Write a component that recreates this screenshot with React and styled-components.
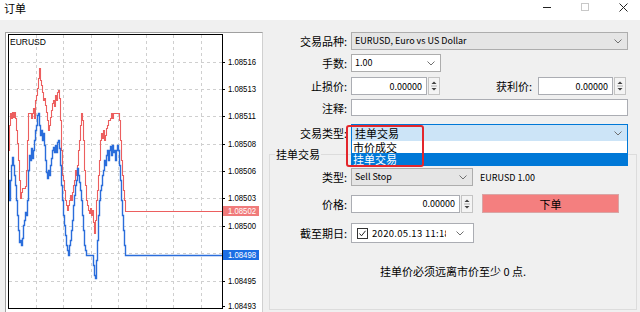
import React from "react";
import styled, { createGlobalStyle } from "styled-components";

const GlobalStyle = createGlobalStyle`
  body {
    margin: 0;
    background: #f0f0f0;
    overflow: hidden;
  }
`;

const Window = styled.div`
  width: 640px;
  height: 312px;
  overflow: hidden;
  display: flex;
  flex-direction: column;
  font-family: "Noto Sans CJK SC", "Liberation Sans", sans-serif;
  color: #000;
`;

const TitleBar = styled.div`
  height: 20px;
  flex-shrink: 0;
  background: #fff;
  display: flex;
  justify-content: space-between;
  align-items: flex-start;
  padding-left: 4px;
  font-size: 11px;
  line-height: 14px;
`;

const Title = styled.span`
  padding-top: 1px;
`;

const Controls = styled.div`
  display: flex;
  gap: 30px;
  padding: 3px 12px 0 0;
`;

const Body = styled.div`
  flex: 1;
  display: flex;
  background: #f0f0f0;
  min-height: 0;
`;

const ChartPanel = styled.div`
  margin: 12px 0 0 5px;
  width: 256px;
  background: #fff;
  border: 1px solid #a0a0a0;
  border-bottom: none;
  border-right-color: #d0d0d0;
  display: flex;
  overflow: hidden;
`;

const Form = styled.div`
  flex: 1;
  display: flex;
  flex-direction: column;
  padding-top: 12px;
`;

const Stack = styled.div`
  display: flex;
  flex-direction: column;
  gap: 4px;
`;

const Row = styled.div`
  display: flex;
  align-items: center;
  height: ${(p) => p.$h || 18}px;
  margin-top: ${(p) => p.$mt || 0}px;
`;

const Label = styled.span`
  width: ${(p) => (p.$w ? `${p.$w}px` : "auto")};
  margin-left: ${(p) => p.$ml || 0}px;
  margin-right: ${(p) => p.$gap ?? 4}px;
  text-align: right;
  font-size: 11px;
  line-height: 14px;
  white-space: nowrap;
`;

const comboBg = { disabled: "#e5e5e5", focus: "#cce4f7", plain: "#fff" };

const Combo = styled.div`
  position: relative;
  box-sizing: border-box;
  width: ${(p) => p.$w}px;
  height: 18px;
  display: flex;
  align-items: center;
  justify-content: space-between;
  padding: 0 5px 0 3px;
  background: ${(p) => comboBg[p.$variant || "plain"]};
  border: 1px solid ${(p) => (p.$variant === "focus" ? "#0078d7" : "#adadad")};
`;

const Val = styled.span`
  font-size: ${(p) => (p.$cjk ? 11 : 9)}px;
  line-height: ${(p) => (p.$cjk ? 13 : 12)}px;
  white-space: nowrap;
`;

const TextBox = styled.div`
  box-sizing: border-box;
  width: ${(p) => p.$w}px;
  height: 17px;
  background: #fff;
  border: 1px solid #abadb3;
`;

const Spin = styled.div`
  display: flex;
  width: ${(p) => p.$w}px;
  height: 18px;
  gap: 1px;
`;

const SpinInput = styled.div`
  flex: 1;
  box-sizing: border-box;
  border: 1px solid #abadb3;
  background: #fff;
  display: flex;
  align-items: center;
  justify-content: flex-end;
  padding-right: 4px;
  font-size: 9px;
`;

const SpinButtons = styled.div`
  width: 12px;
  box-sizing: border-box;
  border: 1px solid #c4c4c4;
  background: #f4f4f4;
  display: flex;
  align-items: center;
  justify-content: center;
`;

const Dropdown = styled.div`
  position: absolute;
  top: 16px;
  left: -1px;
  right: -1px;
  background: #fff;
  border: 1px solid #0078d7;
  border-top: none;
  z-index: 2;
`;

const Option = styled.div`
  height: 12px;
  padding-left: 1px;
  font-size: 11px;
  line-height: 12px;
  background: ${(p) => (p.$active ? "#0078d7" : "transparent")};
  color: ${(p) => (p.$active ? "#fff" : "#000")};
`;

const Marker = styled.div`
  position: absolute;
  left: -6px;
  top: 0;
  width: 78px;
  height: 42px;
  box-sizing: border-box;
  border: 2px solid #e3262c;
  border-radius: 3px;
  z-index: 3;
`;

const GroupBox = styled.div`
  position: relative;
  flex: 1;
  margin: 12px 3px 2px 6px;
  border: 1px solid #dcdcdc;
  padding-top: 13px;
  display: flex;
  flex-direction: column;
`;

const Legend = styled.span`
  position: absolute;
  top: -8px;
  left: 5px;
  padding: 0 1px;
  background: #f0f0f0;
  font-size: 11px;
  line-height: 14px;
`;

const Side = styled.span`
  margin-left: 7px;
  font-size: 9px;
`;

const OrderButton = styled.div`
  margin-left: 9px;
  box-sizing: border-box;
  width: 137px;
  height: 19px;
  background: #f47f7f;
  border: 1px solid #d9a5a5;
  display: flex;
  align-items: center;
  justify-content: center;
  font-size: 11px;
`;

const DateBox = styled.div`
  box-sizing: border-box;
  width: 123px;
  height: 20px;
  background: #fff;
  border: 1px solid #abadb3;
  display: flex;
  align-items: center;
  padding-left: 5px;
`;

const DateText = styled.span`
  margin: 0 10px 0 4px;
  width: 74px;
  overflow: hidden;
  white-space: nowrap;
  font-size: 9.5px;
  letter-spacing: 0.3px;
`;

const Note = styled.div`
  margin-top: 22px;
  text-align: center;
  font-size: 11px;
  line-height: 12px;
`;

const Chevron = () => (
  <svg width="8" height="5" viewBox="0 0 8 5">
    <polyline points="0.5,0.5 4,4 7.5,0.5" fill="none" stroke="#707070" strokeWidth="1" />
  </svg>
);

const SpinArrows = () => (
  <svg width="6" height="12" viewBox="0 0 6 12">
    <polygon points="0.5,4 3,1.5 5.5,4" fill="#404040" />
    <line x1="0" y1="6" x2="6" y2="6" stroke="#b0b0b0" />
    <polygon points="0.5,8 3,10.5 5.5,8" fill="#404040" />
  </svg>
);

const Check = () => (
  <svg width="11" height="11" viewBox="0 0 11 11">
    <rect x="0.5" y="0.5" width="10" height="10" fill="#fff" stroke="#333" />
    <polyline points="2.5,5.5 4.5,7.8 8.5,2.8" fill="none" stroke="#222" strokeWidth="1" />
  </svg>
);

// ask / bid tick lines, page coordinates
const ask = [
  [8, 150], [9, 125], [10, 113], [11, 118], [12, 112], [13, 117], [14, 112], [15, 118], [16, 130],
  [17, 143], [18, 160], [19, 180], [20, 198], [21, 192], [22, 188], [24, 188], [25, 186], [26, 170],
  [27, 140], [28, 113], [30, 113], [31, 118], [32, 113], [33, 108], [34, 118], [35, 100], [36, 95],
  [37, 88], [38, 78], [39, 68], [40, 80], [41, 85], [42, 92], [43, 100], [44, 98], [45, 105],
  [46, 112], [47, 120], [48, 130], [49, 125], [50, 117], [51, 110], [52, 103], [53, 100], [54, 106],
  [55, 95], [56, 100], [57, 92], [58, 90], [59, 98], [60, 120], [61, 150], [62, 175], [63, 180],
  [64, 190], [65, 200], [66, 205], [67, 210], [68, 205], [69, 200], [70, 195], [71, 200], [72, 192],
  [73, 185], [74, 180], [75, 170], [76, 175], [77, 165], [78, 150], [79, 140], [80, 125], [81, 113],
  [82, 120], [83, 140], [84, 170], [85, 185], [86, 200], [87, 205], [88, 210], [89, 213], [90, 208],
  [91, 215], [92, 210], [93, 222], [94, 233], [95, 220], [96, 200], [97, 190], [98, 175], [99, 160],
  [100, 140], [101, 133], [102, 138], [103, 130], [104, 140], [105, 135], [106, 128], [107, 125],
  [108, 120], [110, 118], [111, 113], [112, 118], [113, 113], [118, 113], [119, 120], [120, 140],
  [121, 160], [122, 175], [123, 190], [124, 200], [125, 211], [222, 211],
];

const bid = [
  [8, 180], [9, 200], [10, 180], [11, 165], [12, 157], [13, 165], [14, 175], [15, 185], [16, 200],
  [17, 215], [18, 230], [19, 242], [20, 240], [21, 245], [22, 238], [23, 225], [24, 220], [25, 212],
  [26, 215], [27, 200], [28, 170], [29, 155], [30, 160], [31, 148], [32, 158], [33, 150], [34, 140],
  [35, 130], [36, 125], [37, 115], [38, 113], [39, 125], [40, 135], [41, 130], [42, 140], [43, 133],
  [44, 145], [45, 160], [46, 172], [47, 178], [48, 170], [49, 175], [50, 165], [51, 158], [52, 150],
  [53, 147], [54, 152], [55, 145], [56, 152], [57, 142], [58, 140], [59, 148], [60, 165], [61, 185],
  [62, 200], [63, 215], [64, 225], [65, 235], [66, 245], [67, 250], [68, 255], [69, 245], [70, 240],
  [71, 230], [72, 220], [73, 205], [74, 195], [75, 185], [76, 180], [77, 168], [78, 175], [79, 182],
  [80, 190], [81, 200], [82, 215], [83, 230], [84, 245], [85, 250], [86, 255], [92, 255], [93, 265],
  [94, 275], [95, 278], [96, 260], [97, 240], [98, 215], [99, 200], [100, 190], [101, 185], [102, 175],
  [103, 170], [104, 160], [105, 165], [106, 155], [107, 150], [108, 160], [109, 150], [110, 146],
  [111, 155], [112, 145], [113, 152], [114, 150], [115, 160], [116, 150], [117, 145], [118, 150],
  [119, 165], [120, 180], [121, 200], [122, 215], [123, 230], [124, 245], [125, 255], [222, 255],
];

const gridX = [36, 63, 91, 118, 146, 173, 201];
const gridY = [62, 89, 116, 144, 171, 198, 226, 253, 281];
const prices = [
  ["1.08516", 62], ["1.08513", 89], ["1.08511", 116], ["1.08508", 144], ["1.08506", 171],
  ["1.08503", 198], ["1.08500", 226], ["1.08495", 281], ["1.08493", 306],
];

// tick chart is drawn as a staircase
const steps = (a) =>
  a.map(([x, y], i) => (i === 0 ? `M${x + 0.5} ${y + 0.5}` : `H${x + 0.5} V${y + 0.5}`)).join(" ");

const PriceChart = () => (
  <svg width="256" height="279" viewBox="6 33 256 279" fontFamily="Liberation Sans, sans-serif" fontSize="8.5">
    <g stroke="#cfcfcf" strokeDasharray="3 3" shapeRendering="crispEdges">
      {gridX.map((x) => (
        <line key={x} x1={x + 0.5} y1="35" x2={x + 0.5} y2="308" />
      ))}
      {gridY.map((y) => (
        <line key={y} x1="9" y1={y + 0.5} x2="222" y2={y + 0.5} />
      ))}
    </g>
    <text x="10" y="45" fill="#000">EURUSD</text>
    <path d={steps(ask)} fill="none" stroke="#ec5f5f" strokeWidth="1.1" />
    <path d={steps(bid)} fill="none" stroke="#2a6ddb" strokeWidth="1.4" />
    <rect x="8.5" y="34.5" width="214" height="274" fill="none" stroke="#000" shapeRendering="crispEdges" />
    <g stroke="#000" shapeRendering="crispEdges">
      {prices.map(([, y]) => (
        <line key={y} x1="222" y1={y + 0.5} x2="225" y2={y + 0.5} />
      ))}
    </g>
    {prices.map(([v, y]) => (
      <text key={v} x="228" y={y + 3} fill="#000" textLength="28" lengthAdjust="spacingAndGlyphs">{v}</text>
    ))}
    <rect x="223" y="206" width="36" height="10" fill="#f07b7b" />
    <text x="228" y="214" fill="#fff" textLength="28" lengthAdjust="spacingAndGlyphs">1.08502</text>
    <rect x="223" y="250" width="36" height="10" fill="#1c6ee4" />
    <text x="228" y="258" fill="#fff" textLength="28" lengthAdjust="spacingAndGlyphs">1.08498</text>
  </svg>
);

const WindowControls = () => (
  <Controls>
    <svg width="8" height="9" viewBox="0 0 8 9">
      <line x1="0" y1="4.5" x2="8" y2="4.5" stroke="#222" />
    </svg>
    <svg width="8" height="9" viewBox="0 0 8 9">
      <rect x="0.5" y="0.5" width="7" height="7" fill="none" stroke="#c8c8c8" />
    </svg>
    <svg width="9" height="9" viewBox="0 0 9 9">
      <path d="M0.5 0.5 L8.5 8.5 M8.5 0.5 L0.5 8.5" stroke="#222" strokeWidth="1" />
    </svg>
  </Controls>
);

const App = () => (
  <>
    <GlobalStyle />
    <Window>
      <TitleBar>
        <Title>订单</Title>
        <WindowControls />
      </TitleBar>
      <Body>
        <ChartPanel>
          <PriceChart />
        </ChartPanel>
        <Form>
          <Stack>
            <Row>
              <Label $w={84}>交易品种:</Label>
              <Combo $w={277} $variant="disabled">
                <Val>EURUSD, Euro vs US Dollar</Val>
                <Chevron />
              </Combo>
            </Row>
            <Row>
              <Label $w={84}>手数:</Label>
              <Combo $w={90}>
                <Val>1.00</Val>
                <Chevron />
              </Combo>
            </Row>
            <Row $mt={1}>
              <Label $w={84}>止损价:</Label>
              <Spin $w={89}>
                <SpinInput>0.00000</SpinInput>
                <SpinButtons>
                  <SpinArrows />
                </SpinButtons>
              </Spin>
              <Label $ml={56} $gap={6}>获利价:</Label>
              <Spin $w={88}>
                <SpinInput>0.00000</SpinInput>
                <SpinButtons>
                  <SpinArrows />
                </SpinButtons>
              </Spin>
            </Row>
            <Row $h={17}>
              <Label $w={84}>注释:</Label>
              <TextBox $w={277} />
            </Row>
            <Row $mt={4}>
              <Label $w={84}>交易类型:</Label>
              <Combo $w={277} $variant="focus">
                <Val $cjk>挂单交易</Val>
                <Chevron />
                <Dropdown>
                  <Option>市价成交</Option>
                  <Option $active>挂单交易</Option>
                </Dropdown>
                <Marker />
              </Combo>
            </Row>
          </Stack>
          <GroupBox>
            <Legend>挂单交易</Legend>
            <Row>
              <Label $w={77}>类型:</Label>
              <Combo $w={122} $variant="disabled">
                <Val>Sell Stop</Val>
                <Chevron />
              </Combo>
              <Side>EURUSD 1.00</Side>
            </Row>
            <Row $h={19} $mt={8}>
              <Label $w={77}>价格:</Label>
              <Spin $w={122}>
                <SpinInput>0.00000</SpinInput>
                <SpinButtons>
                  <SpinArrows />
                </SpinButtons>
              </Spin>
              <OrderButton>下单</OrderButton>
            </Row>
            <Row $h={20} $mt={10}>
              <Label $w={77}>截至期日:</Label>
              <DateBox>
                <Check />
                <DateText>2020.05.13 11:18</DateText>
                <Chevron />
              </DateBox>
            </Row>
            <Note>挂单价必须远离市价至少 0 点.</Note>
          </GroupBox>
        </Form>
      </Body>
    </Window>
  </>
);

export default App;
